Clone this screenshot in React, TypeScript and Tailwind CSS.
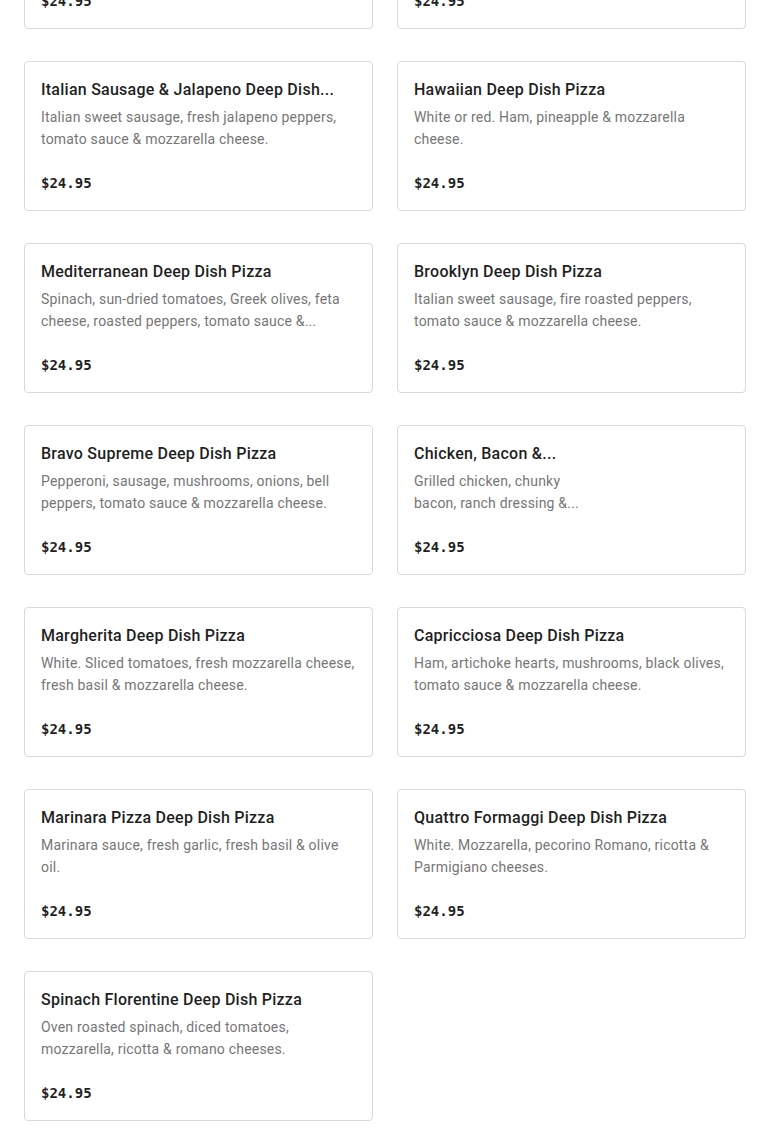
type Pizza = {
  name: string;
  desc: string;
  price: string;
  photo?: boolean;
};

// names/descriptions are shortened at a word boundary the same way the menu does
const pizzas: Pizza[] = [
  { name: 'Chicago Classic Deep Dish Pizza', desc: 'Italian sausage, tomato sauce & mozzarella cheese.', price: '$24.95' },
  { name: 'Meat Lovers Deep Dish Pizza', desc: 'Pepperoni, sausage, bacon, meatballs, tomato sauce & mozzarella cheese.', price: '$24.95' },
  { name: 'Italian Sausage & Jalapeno Deep Dish...', desc: 'Italian sweet sausage, fresh jalapeno peppers, tomato sauce & mozzarella cheese.', price: '$24.95' },
  { name: 'Hawaiian Deep Dish Pizza', desc: 'White or red. Ham, pineapple & mozzarella cheese.', price: '$24.95' },
  { name: 'Mediterranean Deep Dish Pizza', desc: 'Spinach, sun-dried tomatoes, Greek olives, feta cheese, roasted peppers, tomato sauce &...', price: '$24.95' },
  { name: 'Brooklyn Deep Dish Pizza', desc: 'Italian sweet sausage, fire roasted peppers, tomato sauce & mozzarella cheese.', price: '$24.95' },
  { name: 'Bravo Supreme Deep Dish Pizza', desc: 'Pepperoni, sausage, mushrooms, onions, bell peppers, tomato sauce & mozzarella cheese.', price: '$24.95' },
  { name: 'Chicken, Bacon &...', desc: 'Grilled chicken, chunky bacon, ranch dressing &...', price: '$24.95', photo: true },
  { name: 'Margherita Deep Dish Pizza', desc: 'White. Sliced tomatoes, fresh mozzarella cheese, fresh basil & mozzarella cheese.', price: '$24.95' },
  { name: 'Capricciosa Deep Dish Pizza', desc: 'Ham, artichoke hearts, mushrooms, black olives, tomato sauce & mozzarella cheese.', price: '$24.95' },
  { name: 'Marinara Pizza Deep Dish Pizza', desc: 'Marinara sauce, fresh garlic, fresh basil & olive oil.', price: '$24.95' },
  { name: 'Quattro Formaggi Deep Dish Pizza', desc: 'White. Mozzarella, pecorino Romano, ricotta & Parmigiano cheeses.', price: '$24.95' },
  { name: 'Spinach Florentine Deep Dish Pizza', desc: 'Oven roasted spinach, diced tomatoes, mozzarella, ricotta & romano cheeses.', price: '$24.95' },
];

function PizzaCard({ item }: { item: Pizza }) {
  return (
    <button className="flex h-[150px] w-full gap-4 rounded border border-[#d9d9d9] bg-white p-4 text-left">
      <div className="flex min-w-0 flex-1 flex-col">
        <h3 className="truncate text-base leading-6 font-medium tracking-[0.25px] text-[#1f1f1f]">{item.name}</h3>
        <p className="mt-1 line-clamp-2 text-sm leading-[22px] tracking-[0.2px] text-[#767676]">{item.desc}</p>
        <span className="mt-auto font-['DejaVu_Sans_Mono',monospace] text-sm leading-[22px] font-bold text-[#1f1f1f]">
          {item.price}
        </span>
      </div>
      {/* photo slot, image not loaded */}
      {item.photo && <div className="w-[120px] shrink-0" />}
    </button>
  );
}

export default function App() {
  return (
    <div className="min-h-screen overflow-hidden bg-white font-['Roboto',sans-serif]">
      <div className="-mt-[121px] grid grid-cols-2 gap-x-6 gap-y-8 px-6 pb-8">
        {pizzas.map((p) => (
          <PizzaCard key={p.name} item={p} />
        ))}
      </div>
    </div>
  );
}
